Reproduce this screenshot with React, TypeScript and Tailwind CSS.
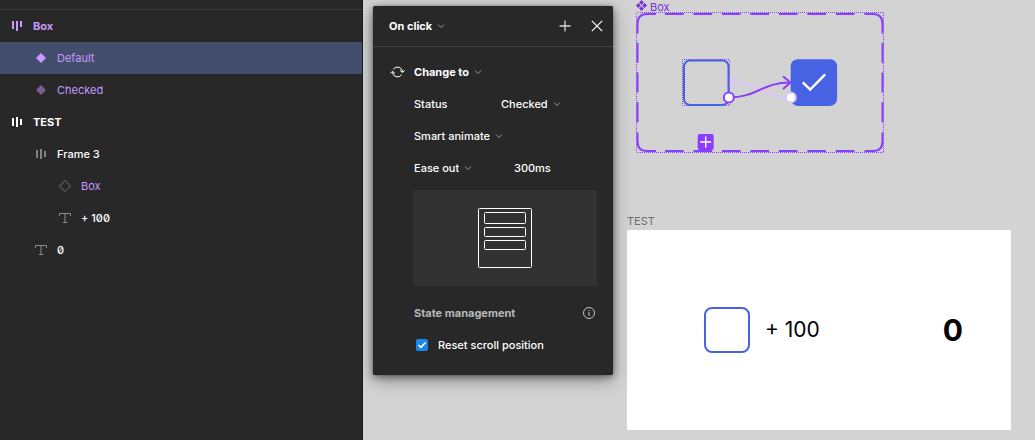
import type { ReactNode } from "react";

type Layer = {
  id: string;
  name: string;
  icon: ReactNode;
  indent: string;
  tone: string;
  selected?: boolean;
};

function SetIcon() {
  return (
    <svg width="12" height="12" viewBox="0 0 12 12" fill="currentColor">
      <rect x="0" y="1" width="2" height="8" />
      <rect x="4" y="1" width="2" height="10" />
      <rect x="8" y="1" width="2" height="6" />
    </svg>
  );
}

function AutoLayoutIcon() {
  return (
    <svg width="12" height="12" viewBox="0 0 12 12" fill="currentColor">
      <rect x="0" y="2" width="2" height="8" />
      <rect x="4" y="1" width="2" height="10" />
      <rect x="8" y="3" width="2" height="6" />
    </svg>
  );
}

function DiamondIcon() {
  return (
    <svg width="12" height="12" viewBox="0 0 12 12" fill="currentColor">
      <path d="M5 1L10 6L5 11L0 6Z" />
    </svg>
  );
}

function InstanceIcon() {
  return (
    <svg width="12" height="12" viewBox="0 0 12 12" fill="none" stroke="#5f4e70" className="overflow-visible">
      <path d="M5 0.5L10.5 6L5 11.5L-0.5 6Z" strokeWidth="1.2" />
    </svg>
  );
}

function TextIcon() {
  return (
    <svg width="12" height="12" viewBox="0 0 12 12" fill="none" stroke="currentColor" className="overflow-visible">
      <path d="M-0.5 4V1.5H10.5V4M5 1.5V10.5M3 10.5H7" />
    </svg>
  );
}

function Chevron() {
  return (
    <svg width="8" height="6" viewBox="0 0 8 6" fill="none" stroke="#999999" className="pointer-events-none shrink-0">
      <path d="M1 1.5L4 4.5L7 1.5" />
    </svg>
  );
}

const layers: Layer[] = [
  { id: "set", name: "Box", icon: <SetIcon />, indent: "pl-3", tone: "font-bold text-[#c79aff]" },
  { id: "default", name: "Default", icon: <DiamondIcon />, indent: "pl-9", tone: "text-[#c79aff]", selected: true },
  {
    id: "checked",
    name: "Checked",
    icon: <span className="text-[#77608f]"><DiamondIcon /></span>,
    indent: "pl-9",
    tone: "text-[#c79aff]",
  },
  { id: "test", name: "TEST", icon: <AutoLayoutIcon />, indent: "pl-3", tone: "font-bold text-white" },
  {
    id: "frame",
    name: "Frame 3",
    icon: <span className="text-[#808080]"><AutoLayoutIcon /></span>,
    indent: "pl-9",
    tone: "font-medium text-white",
  },
  { id: "instance", name: "Box", icon: <InstanceIcon />, indent: "pl-[60px]", tone: "text-[#c79aff]" },
  {
    id: "plus",
    name: "+ 100",
    icon: <span className="text-[#8c8c8c]"><TextIcon /></span>,
    indent: "pl-[60px]",
    tone: "font-medium text-white",
  },
  {
    id: "zero",
    name: "0",
    icon: <span className="text-[#8c8c8c]"><TextIcon /></span>,
    indent: "pl-9",
    tone: "font-medium text-white",
  },
];

function LayersPanel() {
  return (
    <aside className="w-[363px] shrink-0 border-r border-[#1c1c1c] bg-[#282828] pt-[9px]">
      <ul className="border-t border-[#3c3c3c] [font-feature-settings:'zero']">
        {layers.map((layer) => (
          <li key={layer.id} className={layer.selected ? "bg-[#424e6b]" : ""}>
            <button type="button" className={`flex h-8 w-full items-center gap-[9px] text-left ${layer.indent} ${layer.tone}`}>
              <span className="w-3 shrink-0">{layer.icon}</span>
              {layer.name}
            </button>
          </li>
        ))}
      </ul>
    </aside>
  );
}

type DropdownProps = {
  label: string;
  value: string;
  bold?: boolean;
};

function Dropdown({ label, value, bold }: DropdownProps) {
  return (
    <label className="flex items-center gap-[5px]">
      <select
        aria-label={label}
        defaultValue={value}
        className={`appearance-none bg-transparent outline-none [field-sizing:content] ${bold ? "font-bold" : "font-medium"}`}
      >
        <option>{value}</option>
      </select>
      <Chevron />
    </label>
  );
}

function InteractionPanel() {
  return (
    <section className="absolute top-[6px] left-[10px] w-60 rounded-[2px] bg-[#282828] pb-[14px] font-medium text-white shadow-[0_5px_17px_rgba(0,0,0,0.35),0_2px_7px_rgba(0,0,0,0.4),0_0_1px_rgba(0,0,0,0.6)]">
      <header className="flex h-[41px] items-center border-b border-[#434343] pr-[10px] pl-4">
        <Dropdown label="Trigger" value="On click" bold />
        <button type="button" aria-label="Add action" className="ml-auto">
          <svg width="12" height="12" viewBox="0 0 12 12" stroke="#d5d5d5">
            <path d="M6 0.5V11.5M0.5 6H11.5" strokeWidth="1.3" />
          </svg>
        </button>
        <button type="button" aria-label="Close" className="ml-5">
          <svg width="12" height="12" viewBox="0 0 12 12" stroke="white">
            <path d="M0.8 0.8L11.2 11.2M11.2 0.8L0.8 11.2" strokeWidth="1.2" />
          </svg>
        </button>
      </header>

      <div className="pt-[9px] pr-4 pl-[41px]">
        <div className="-ml-6 flex h-8 items-center gap-[9px]">
          <svg width="15" height="12" viewBox="0 0 15 12" fill="none" stroke="white" className="shrink-0">
            <path d="M3.4 3.2A5 5 0 0 1 12.5 6M11.6 8.8A5 5 0 0 1 2.5 6M0.4 7.4L2.5 5.2L4.9 7.4M10.1 4.4L12.5 6.6L14.6 4.4" />
          </svg>
          <Dropdown label="Action" value="Change to" bold />
        </div>
        <div className="grid h-8 grid-cols-[87px_1fr] items-center">
          <span>Status</span>
          <Dropdown label="Status" value="Checked" />
        </div>
        <div className="flex h-8 items-center">
          <Dropdown label="Animation" value="Smart animate" />
        </div>
        <div className="grid h-8 grid-cols-[100px_1fr] items-center">
          <Dropdown label="Easing" value="Ease out" />
          <input aria-label="Duration" defaultValue="300ms" className="w-full min-w-0 bg-transparent outline-none" />
        </div>

        <div className="mt-[6px] -ml-px flex h-24 items-center justify-center rounded-[2px] bg-[#323232]">
          <svg width="54" height="60" viewBox="0 0 54 60" fill="none" stroke="white">
            <rect x="0.5" y="0.5" width="53" height="59" rx="1" />
            <rect x="6.5" y="4.5" width="41" height="11" rx="1" />
            <rect x="6.5" y="19.5" width="41" height="9" rx="1" />
            <rect x="6.5" y="32.5" width="41" height="9" rx="1" />
          </svg>
        </div>

        <div className="mt-[11px] flex h-8 items-center justify-between font-bold text-[#b8b8b8]">
          <h2>State management</h2>
          <button type="button" aria-label="About state management" className="mr-[2px]">
            <svg width="12" height="12" viewBox="0 0 12 12" fill="none" stroke="#c4c4c4">
              <circle cx="6" cy="6" r="5.5" />
              <path d="M6 5V9M6 3V4" />
            </svg>
          </button>
        </div>
        <label className="flex h-8 items-center gap-[10px] pl-[2px]">
          <span className="grid">
            <input
              type="checkbox"
              defaultChecked
              className="col-start-1 row-start-1 size-3 appearance-none rounded-[2px] bg-[#3c3c3c] checked:bg-[#1a86e8]"
            />
            <svg width="12" height="12" viewBox="0 0 12 12" fill="none" stroke="white" className="pointer-events-none col-start-1 row-start-1">
              <path d="M2.5 6L5 8.3L9.5 3.5" strokeWidth="1.6" />
            </svg>
          </span>
          Reset scroll position
        </label>
      </div>
    </section>
  );
}

function ComponentSet() {
  return (
    <div className="absolute top-0 left-[273px]">
      <h2 className="flex h-3 items-start gap-[3px] leading-[14px] text-[#7a2fd6]">
        <svg width="11" height="11" viewBox="0 0 12 12" fill="currentColor">
          <path d="M6 0L8.6 2.6L6 5.2L3.4 2.6ZM2.6 3.4L5.2 6L2.6 8.6L0 6ZM9.4 3.4L12 6L9.4 8.6L6.8 6ZM6 6.8L8.6 9.4L6 12L3.4 9.4Z" />
        </svg>
        Box
      </h2>
      <svg width="248" height="141" viewBox="636 12 248 141" fill="none">
        <rect x="636.5" y="12.5" width="247" height="140" stroke="#8a3ffc" strokeDasharray="1 1" strokeDashoffset="0.5" />
        <g stroke="#8a3ffc" strokeWidth="2">
          <path d="M656 14H647Q637.5 14 637.5 24V33.5M864.5 14H873Q882.5 14 882.5 24V33.5M656 151H647Q637.5 151 637.5 141V132.5M864.5 151H873Q882.5 151 882.5 141V132.5" />
          <path d="M665 14H855M665 151H855" strokeDasharray="18.7 9.76" />
          <path d="M637.5 42.7V123M882.5 42.7V123" strokeDasharray="20 9.8" />
        </g>

        <rect x="682.5" y="59.5" width="47" height="46" stroke="#8a3ffc" strokeDasharray="1 1" strokeDashoffset="0.5" />
        <rect x="684" y="60.5" width="44.5" height="44.5" rx="6" stroke="#4763e4" strokeWidth="2" />
        <rect x="790.7" y="59.3" width="46.4" height="46.6" rx="7" fill="#4763e4" />
        <path d="M802.8 82.3L810.2 89.6L825.2 74.3" stroke="white" strokeWidth="2.4" />

        <path d="M790 97.5C762 97.5 759 82 731 82M737.5 76L731 82L737.5 88.5" stroke="#dcc3fa" strokeWidth="2" />
        <path d="M729 97.5C757 97.5 762 82.5 790 82.5M783 76.3L790.5 82.5L783 89" stroke="#8a3ffc" strokeWidth="2" />
        <circle cx="728.8" cy="97.5" r="5" fill="white" stroke="#8a3ffc" strokeWidth="2" />
        <circle cx="790.8" cy="97.5" r="5" fill="white" stroke="#dcc3fa" strokeWidth="2" />

        <rect x="697.7" y="134" width="16" height="16" rx="2" fill="#8a3ffc" />
        <path d="M705.7 136.5V147.5M700.2 142H711.2" stroke="white" strokeWidth="1.4" />
      </svg>
    </div>
  );
}

function TestFrame() {
  return (
    <div className="absolute top-[213px] left-[264px] w-96 max-w-full">
      <h2 className="h-[17px] text-[#6e6e6e]">TEST</h2>
      <div className="flex h-[200px] items-center bg-white pr-12 pl-[77px] text-black">
        <div className="size-[46px] rounded-[8px] border-2 border-[#4763e4]" />
        <p className="ml-[15px] text-[21px] leading-7">+ 100</p>
        <p className="ml-auto text-[30px] leading-9 font-bold">0</p>
      </div>
    </div>
  );
}

export default function App() {
  return (
    <div className="flex min-h-screen bg-[#d3d3d3] font-['Inter',sans-serif] text-[11px] leading-4">
      <LayersPanel />
      <main className="relative min-w-0 flex-1 overflow-hidden">
        <ComponentSet />
        <TestFrame />
        <InteractionPanel />
      </main>
    </div>
  );
}
